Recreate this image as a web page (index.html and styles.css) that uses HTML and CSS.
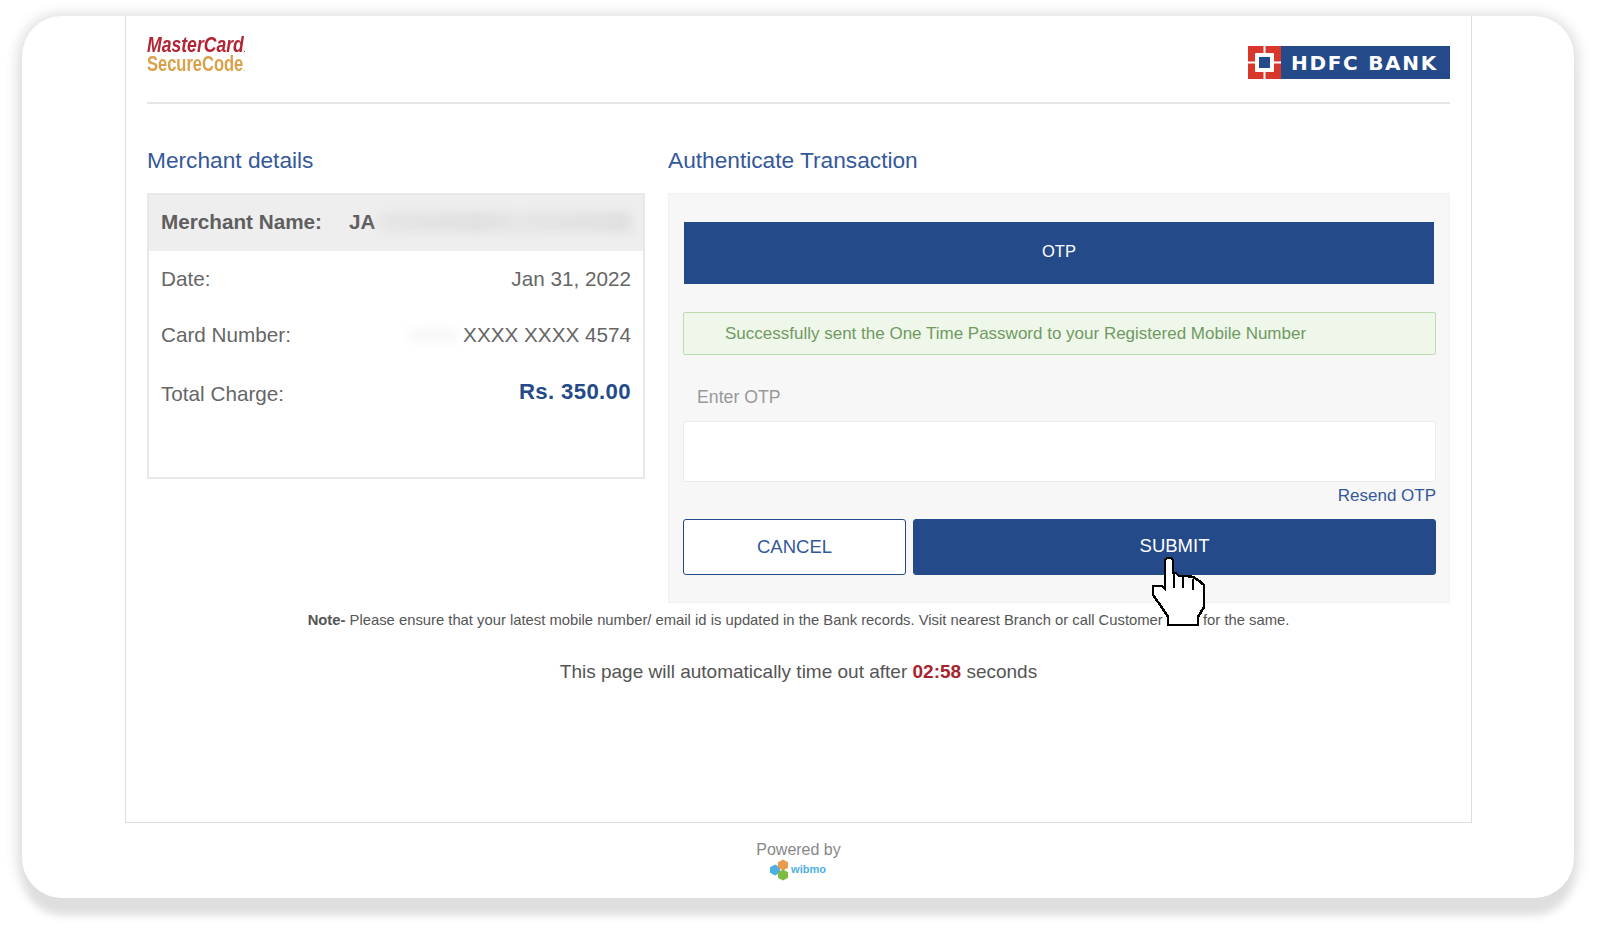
FILE: index.html
```html
<!DOCTYPE html>
<html lang="en">
<head>
<meta charset="UTF-8">
<title>Authenticate Transaction</title>
<link rel="stylesheet" href="styles.css">
</head>
<body>
<div class="screen">
  <div class="frame">
    <header class="top">
      <div class="mc-logo">
        <span class="mc-red">MasterCard<small>.</small></span>
        <span class="mc-gold">SecureCode<small>.</small></span>
      </div>
      <div class="hdfc-logo">
        <svg class="hdfc-mark" viewBox="0 0 33 33" width="33" height="33">
          <rect width="33" height="33" fill="#d9372c"/>
          <rect x="15.5" width="2" height="33" fill="#fff"/>
          <rect y="15.5" width="33" height="2" fill="#fff"/>
          <rect x="7" y="7" width="19" height="19" rx="1" fill="#fff"/>
          <rect x="11" y="11" width="11" height="11" fill="#254a89"/>
        </svg>
        <span class="hdfc-name">HDFC BANK</span>
      </div>
    </header>

    <section class="cols">
      <div class="col-left">
        <h2>Merchant details</h2>
        <div class="merchant">
          <div class="row row-head"><b>Merchant Name:</b><span class="m-name">JA</span><i class="smudge"></i></div>
          <div class="row"><span>Date:</span><span>Jan 31, 2022</span></div>
          <div class="row"><span>Card Number:</span><span class="card-no"><i class="smudge-card"></i>XXXX XXXX 4574</span></div>
          <div class="row row-total"><span>Total Charge:</span><b class="amount">Rs. 350.00</b></div>
        </div>
      </div>
      <div class="col-right">
        <h2>Authenticate Transaction</h2>
        <div class="otp-panel">
          <div class="otp-bar">OTP</div>
          <div class="alert">Successfully sent the One Time Password to your Registered Mobile Number</div>
          <label class="otp-label" for="otp">Enter OTP</label>
          <input class="otp-input" id="otp" type="text">
          <div class="resend"><a href="#">Resend OTP</a></div>
          <div class="btns">
            <button class="btn-cancel">CANCEL</button>
            <button class="btn-submit">SUBMIT</button>
          </div>
        </div>
      </div>
    </section>

    <p class="note"><b>Note-</b> Please ensure that your latest mobile number/ email id is updated in the Bank records. Visit nearest Branch or call Customer Care for the same.</p>
    <p class="timeout">This page will automatically time out after <b>02:58</b> seconds</p>

    <svg class="hand" viewBox="0 0 56 72" width="56" height="72" shape-rendering="crispEdges">
      <path d="M17 3h4l2 2v13h3l3 3h8l6 1 5 3 6 5v22l-6 10v8H18v-8l-5-8-5-7-5-7v-9h9l3 3V5z" fill="#fff" stroke="#000" stroke-width="2.5"/>
      <path d="M24 18v15M33 22v11M43 24v11" fill="none" stroke="#000" stroke-width="2"/>
    </svg>
  </div>

  <footer class="powered">
    <div>Powered by</div>
    <div class="wibmo">
      <svg viewBox="0 0 20 22" width="20" height="22">
        <polygon points="1,8.3 6,5.5 11,8.3 11,13.7 6,16.5 1,13.7" fill="#4fb0e0"/>
        <polygon points="9,3.3 14,.5 19,3.3 19,8.7 14,11.5 9,8.7" fill="#e99b50"/>
        <polygon points="9,13.3 14,10.5 19,13.3 19,18.7 14,21.5 9,18.7" fill="#7dbb42"/>
      </svg>
      <span>wibmo</span>
    </div>
  </footer>
</div>
</body>
</html>
```
FILE: styles.css
```css
*{box-sizing:border-box;}
html,body{height:100%;}
body{margin:0;background:#fff;font-family:"Liberation Sans",Arial,sans-serif;color:#666;overflow:hidden;}

.screen{margin:16px 26px 0 22px;height:882px;padding:0 102px 0 103px;background:#fff;border-radius:40px;box-shadow:0 20px 8px -3px #dedede,0 2px 14px 4px rgba(0,0,0,.14);}
.frame{position:relative;height:807px;padding:0 21px;border:solid #ddd;border-width:0 1px 1px;}

/* logos */
.top{display:flex;justify-content:space-between;align-items:flex-start;height:88px;padding-top:19px;border-bottom:2px solid #e6e6e6;}
.mc-logo{display:flex;flex-direction:column;width:100px;font-weight:700;font-size:22px;line-height:19px;}
.mc-logo span{display:block;white-space:nowrap;transform-origin:0 50%;}
.mc-red{color:#b32435;font-style:italic;transform:scaleX(.8);}
.mc-gold{color:#d9a24a;transform:scaleX(.75);}
.mc-logo small{font-size:8px;line-height:1;}
.hdfc-logo{display:flex;align-items:center;width:202px;height:33px;margin-top:11px;background:#254a89;}
.hdfc-name{margin-left:10px;font-family:"DejaVu Sans",sans-serif;font-weight:700;font-size:20px;letter-spacing:1.7px;color:#fff;white-space:nowrap;}
.hdfc-mark{flex:none;}

/* columns */
.cols{display:flex;gap:23px;}
.col-left{width:498px;}
.col-right{width:782px;}
h2{margin:0 0 20px;padding-top:43px;font-size:22.7px;font-weight:400;line-height:26px;color:#34589b;}

.merchant{height:286px;border:2px solid #e8e8e8;font-size:20.7px;}
.row{display:flex;justify-content:space-between;align-items:center;height:56px;padding:0 12px 0 12px;}
.row-total{height:62px;}
.row-head{justify-content:flex-start;padding-bottom:2px;background:#eee;color:#5f5f5f;}
.m-name{margin-left:27px;font-weight:700;}
.smudge{flex:1;height:20px;margin-left:4px;background:linear-gradient(90deg,#e6e6e6,#e0e0e0 40%,#e6e6e6 55%,#dfdfdf);filter:blur(5px);}
.card-no{display:flex;align-items:center;}
.smudge-card{width:50px;height:14px;margin-right:4px;background:#f8f8f8;filter:blur(5px);}
.amount{font-size:22.2px;letter-spacing:.35px;color:#254a89;margin-top:-4px;}

.otp-panel{height:410px;padding:28px 15px 0;background:#f7f7f7;border:1px solid #f1f1f1;}
.otp-bar{display:flex;align-items:center;justify-content:center;width:750px;height:62px;padding-bottom:4px;background:#254a89;color:#fff;font-size:16.5px;}
.alert{display:flex;align-items:center;height:43px;margin-top:28px;margin-left:-1px;width:753px;padding-left:41px;background:#eff7ea;border:1px solid #bcdcae;border-radius:2px;color:#6f9a62;font-size:17px;}
.otp-label{display:block;margin:30px 0 0 13px;font-size:17.7px;line-height:24px;color:#999;font-weight:400;}
.otp-input{display:block;width:753px;height:61px;margin:12px 0 0 -1px;background:#fff;border:1px solid #ececec;border-radius:3px;}
.resend{width:752px;margin-top:2px;text-align:right;font-size:17px;line-height:24px;}
.resend a{color:#34589b;text-decoration:none;}
.btns{display:flex;gap:7px;width:753px;height:56px;margin:11px 0 0 -1px;}
.btns button{height:100%;font-family:inherit;font-size:18.5px;border-radius:3px;}
.btn-cancel{width:223px;background:#fff;border:1px solid #254a89;color:#34589b;}
.btn-submit{flex:1;background:#254a89;border:1px solid #254a89;color:#fff;padding-bottom:3px;}

.note{margin:9px 0 0;font-size:14.8px;line-height:16px;text-align:center;color:#555;}
.timeout{margin:32px 0 0;font-size:19px;line-height:24px;text-align:center;color:#555;}
.timeout b{color:#a9232f;}

/* mouse pointer sitting on top of the submit button */
.hand{position:absolute;left:1024px;top:539px;}

.powered{padding-top:18px;text-align:center;font-size:16px;line-height:18px;color:#888;}
.wibmo{display:flex;justify-content:center;align-items:center;gap:2px;height:21px;margin-left:-2px;}
.wibmo span{font-size:11px;font-weight:700;color:#4fb0e0;margin-bottom:2px;}
```
